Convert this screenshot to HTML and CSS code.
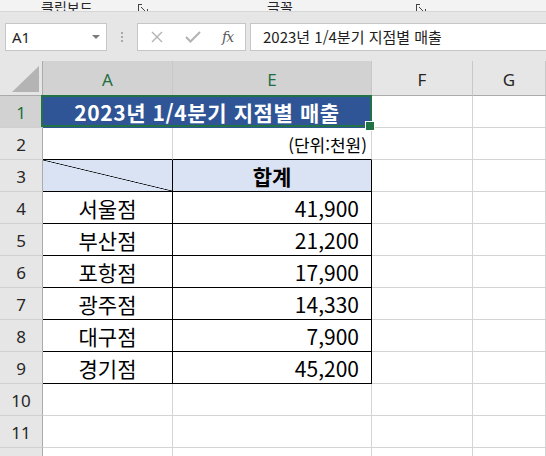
FILE: index.html
```html
<!DOCTYPE html>
<html lang="ko">
<head>
<meta charset="utf-8">
<link rel="stylesheet" href="styles.css">
</head>
<body>
<div class="ribbon">
  <span></span>
  <span class="rlabel">클립보드</span>
  <span></span>
  <svg class="launch" width="11" height="11" viewBox="0 0 11 11"><path d="M0.5 10 V-4 M0.5 0.5 H4 M3 3 L9 9 M5 9.5 H9.5 V5" fill="none" stroke="#444" stroke-width="1"/></svg>
  <span></span>
  <span class="rlabel">글꼴</span>
  <span></span>
  <svg class="launch" width="11" height="11" viewBox="0 0 11 11"><path d="M0.5 10 V-4 M0.5 0.5 H4 M3 3 L9 9 M5 9.5 H9.5 V5" fill="none" stroke="#444" stroke-width="1"/></svg>
</div>
<div class="fbar">
  <div class="namebox"><span class="nb-text">A1</span><span class="nb-arrow"></span></div>
  <div class="grip"><i></i><i></i><i></i></div>
  <div class="btns">
    <svg class="b-x" width="12" height="12" viewBox="0 0 12 12"><path d="M1 1 L11 11 M11 1 L1 11" stroke="#b3b3b3" stroke-width="1.4" fill="none"/></svg>
    <svg class="b-ok" width="16" height="12" viewBox="0 0 16 12"><path d="M1 6 L5.5 10.5 L15 1" stroke="#b3b3b3" stroke-width="2" fill="none"/></svg>
    <span class="b-fx">fx</span>
  </div>
  <div class="finput">2023년 1/4분기 지점별 매출</div>
</div>
<div class="sheet">
  <div class="hd corner"><span class="tri"></span></div>
  <div class="hd col sel">A</div>
  <div class="hd col sel">E</div>
  <div class="hd col">F</div>
  <div class="hd col">G</div>

  <div class="hd row sel">1</div>
  <div class="c title">2023년 1/4분기 지점별 매출</div>
  <div class="c"></div>
  <div class="c"></div>

  <div class="hd row">2</div>
  <div class="c bb"></div>
  <div class="c bb unit">(단위:천원)</div>
  <div class="c"></div>
  <div class="c"></div>

  <div class="hd row">3</div>
  <div class="c bb br diag"></div>
  <div class="c bb br thead">합계</div>
  <div class="c"></div>
  <div class="c"></div>

  <div class="hd row">4</div>
  <div class="c bb br name">서울점</div>
  <div class="c bb br num">41,900</div>
  <div class="c"></div>
  <div class="c"></div>

  <div class="hd row">5</div>
  <div class="c bb br name">부산점</div>
  <div class="c bb br num">21,200</div>
  <div class="c"></div>
  <div class="c"></div>

  <div class="hd row">6</div>
  <div class="c bb br name">포항점</div>
  <div class="c bb br num">17,900</div>
  <div class="c"></div>
  <div class="c"></div>

  <div class="hd row">7</div>
  <div class="c bb br name">광주점</div>
  <div class="c bb br num">14,330</div>
  <div class="c"></div>
  <div class="c"></div>

  <div class="hd row">8</div>
  <div class="c bb br name">대구점</div>
  <div class="c bb br num">7,900</div>
  <div class="c"></div>
  <div class="c"></div>

  <div class="hd row">9</div>
  <div class="c bb br name">경기점</div>
  <div class="c bb br num">45,200</div>
  <div class="c"></div>
  <div class="c"></div>

  <div class="hd row">10</div>
  <div class="c"></div>
  <div class="c"></div>
  <div class="c"></div>
  <div class="c"></div>

  <div class="hd row">11</div>
  <div class="c"></div>
  <div class="c"></div>
  <div class="c"></div>
  <div class="c"></div>

  <div class="hd row"></div>
  <div class="c"></div>
  <div class="c"></div>
  <div class="c"></div>
  <div class="c"></div>
</div>
</body>
</html>
```
FILE: styles.css
```css
* { box-sizing: border-box; margin: 0; padding: 0; }
html, body { width: 546px; height: 456px; overflow: hidden; }
body {
  background: #ffffff;
  font-family: "Noto Sans CJK KR", "Noto Sans", sans-serif;
  color: #000;
}

/* ribbon strip */
.ribbon {
  height: 12px;
  background: #f3f3f3;
  border-bottom: 1px solid #d6d6d6;
  overflow: hidden;
  display: grid;
  grid-template-columns: 41px 50px 47px 11px 118px 28px 121px 11px;
  align-items: end;
}
.rlabel {
  font-size: 14px;
  line-height: 14px;
  color: #262626;
  margin-bottom: 2px;
  white-space: nowrap;
}
.launch { display: block; margin-bottom: 1px; }

/* formula bar */
.fbar {
  height: 49px;
  background: #e6e6e6;
  display: flex;
  align-items: flex-start;
  padding-top: 11px;
}
.namebox {
  margin-left: 5px;
  width: 102px;
  height: 28px;
  background: #fff;
  border: 1px solid #c6c6c6;
  display: flex;
  align-items: center;
  justify-content: space-between;
  padding: 0 6px 0 6px;
}
.nb-text {
  font-family: "Noto Sans", "Liberation Sans", sans-serif;
  font-size: 15px;
  color: #1e1e1e;
}
.nb-arrow {
  width: 0; height: 0;
  border-left: 4px solid transparent;
  border-right: 4px solid transparent;
  border-top: 4px solid #7a7a7a;
}
.grip {
  margin-left: 14px;
  margin-top: 9px;
  width: 3px;
  display: flex;
  flex-direction: column;
  gap: 2px;
}
.grip i { display: block; width: 2px; height: 2px; background: #a8a8a8; }
.btns {
  margin-left: 13px;
  width: 109px;
  height: 28px;
  background: #fff;
  border: 1px solid #c6c6c6;
  display: flex;
  align-items: center;
  padding-left: 13px;
}
.b-x { margin-right: 22px; }
.b-ok { margin-right: 21px; }
.b-fx {
  font-family: "DejaVu Serif", "Liberation Serif", serif;
  font-style: italic;
  font-size: 14px;
  color: #5a5a5a;
  letter-spacing: -1px;
}
.finput {
  margin-left: 4px;
  flex: 1;
  height: 28px;
  background: #fff;
  border: 1px solid #c6c6c6;
  border-right: none;
  font-size: 15px;
  line-height: 26px;
  padding-left: 12px;
  color: #1e1e1e;
  white-space: nowrap;
}

/* sheet */
.sheet {
  display: grid;
  grid-template-columns: 43px 130px 199px 101px 1fr;
  grid-template-rows: 35px repeat(12, 32px);
}
.hd {
  background: #e6e6e6;
  font-family: "Noto Sans", "Liberation Sans", sans-serif;
  font-size: 17px;
  color: #262626;
  display: flex;
  align-items: center;
  justify-content: center;
}
.hd.sel { background: #d2d2d2; color: #1e6e40; }
.corner {
  border-right: 1px solid #ababab;
  border-bottom: 1px solid #ababab;
  align-items: flex-end;
  justify-content: flex-end;
  padding: 0 3px 3px 0;
}
.tri {
  width: 27px; height: 26px;
  background: #b4b4b4;
  clip-path: polygon(100% 0, 100% 100%, 0 100%);
}
.col {
  border-right: 1px solid #c8c8c8;
  border-bottom: 1px solid #ababab;
  padding-top: 2px;
}
.row {
  border-right: 1px solid #ababab;
  border-bottom: 1px solid #d0d0d0;
  padding-top: 1px;
}
.c {
  border-right: 1px solid #d4d4d4;
  border-bottom: 1px solid #d4d4d4;
  font-size: 21px;
  display: flex;
  align-items: center;
  white-space: nowrap;
}
.c.bb { border-bottom-color: #000; }
.c.br { border-right-color: #000; }

.title {
  grid-column: span 2;
  position: relative;
  background: #2f5597;
  color: #fff;
  font-weight: 700;
  font-size: 21px;
  letter-spacing: 0.6px;
  justify-content: center;
  border-right-color: #2f5597;
  border-bottom-color: #2f5597;
}
.title::before {
  content: "";
  position: absolute;
  top: -1px; left: -2px; right: -1px; bottom: 0;
  border: 2px solid #217346;
}
.title::after {
  content: "";
  position: absolute;
  right: -4px; bottom: -4px;
  width: 8px; height: 8px;
  background: #217346;
  border: 1px solid #fff;
}
.unit {
  justify-content: flex-end;
  align-items: flex-end;
  font-size: 17px;
  padding: 0 4px 2px 0;
}
.diag {
  background: linear-gradient(to top right, #dae3f3 calc(50% - 0.7px), #000 50%, #dae3f3 calc(50% + 0.7px));
}
.thead {
  background: #dae3f3;
  font-weight: 700;
  justify-content: center;
}
.name { justify-content: center; }
.num { justify-content: flex-end; padding-right: 12px; }
```
